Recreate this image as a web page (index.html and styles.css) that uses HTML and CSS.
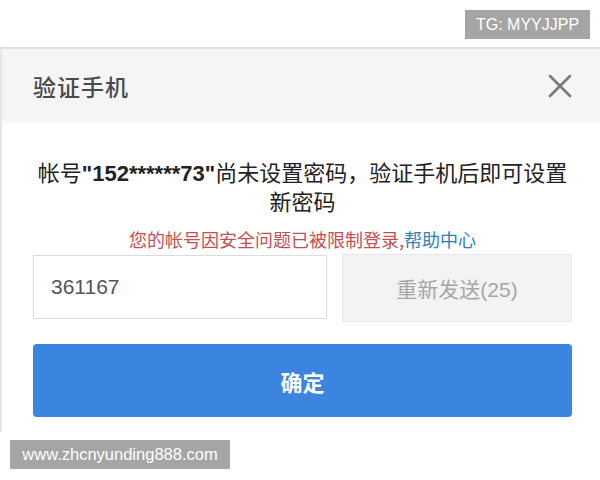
FILE: index.html
```html
<!DOCTYPE html>
<html lang="zh-CN">
<head>
<meta charset="utf-8">
<title>验证手机</title>
<link rel="stylesheet" href="styles.css">
</head>
<body>
<div class="topbar">
  <span class="tag">TG: MYYJJPP</span>
</div>
<div class="dialog">
  <div class="dialog-head">
    <h1 class="title">验证手机</h1>
    <svg class="close" viewBox="0 0 24 24" width="24" height="24" aria-label="关闭">
      <path d="M2 2 L22 22 M22 2 L2 22" stroke="#7a7a7a" stroke-width="2.6" stroke-linecap="round" fill="none"/>
    </svg>
  </div>
  <div class="dialog-body">
    <p class="msg">帐号<b>"152******73"</b>尚未设置密码，验证手机后即可设置新密码</p>
    <p class="warn">您的帐号因安全问题已被限制登录,<a class="help">帮助中心</a></p>
    <div class="code-row">
      <div class="code-input">361167</div>
      <div class="resend">重新发送(25)</div>
    </div>
    <div class="confirm">确定</div>
  </div>
</div>
<div class="footer">
  <span class="site">www.zhcnyunding888.com</span>
</div>
</body>
</html>
```

FILE: styles.css
```css
* { box-sizing: border-box; }
html, body { margin: 0; padding: 0; background: #fff; }
body {
  width: 600px;
  height: 480px;
  overflow: hidden;
  font-family: "Liberation Sans", "Noto Sans CJK SC", sans-serif;
}
.topbar {
  height: 47px;
  display: flex;
  justify-content: flex-end;
  align-items: flex-start;
  padding: 10px 10px 0 0;
}
.tag {
  display: flex;
  align-items: center;
  justify-content: center;
  width: 125px;
  height: 29px;
  background: #a5a5a5;
  color: #fff;
  font-size: 16px;
}
.dialog {
  border-top: 2px solid #dedede;
  border-left: 2px solid #e6e6e6;
  height: 385px;
  background: #fff;
}
.dialog-head {
  height: 74px;
  background: #f5f5f5;
  display: flex;
  align-items: center;
  justify-content: space-between;
  padding: 0 28px 0 31px;
}
.title {
  margin: 0;
  font-family: "Noto Sans CJK SC", sans-serif;
  font-size: 23px;
  font-weight: 500;
  color: #4a4a4a;
  letter-spacing: 1px;
}
.close { display: block; }
.dialog-body {
  padding: 35px 28px 15px 31px;
}
.msg {
  margin: 0;
  text-align: center;
  font-family: "Noto Sans CJK SC", sans-serif;
  font-size: 22px;
  line-height: 27px;
  color: #222;
  padding: 0 4px;
}
.msg b {
  font-family: "Liberation Sans", sans-serif;
  font-weight: bold;
}
.warn {
  margin: 13px 0 3px;
  text-align: center;
  font-family: "Noto Sans CJK SC", sans-serif;
  font-size: 18px;
  line-height: 24px;
  color: #c24f55;
}
.help { color: #2f7fb5; }
.code-row {
  display: flex;
  align-items: flex-start;
  gap: 15px;
}
.code-input {
  width: 294px;
  height: 64px;
  margin-top: 1px;
  border: 1px solid #dcdcdc;
  display: flex;
  align-items: center;
  padding-left: 17px;
  font-size: 21px;
  color: #555;
}
.resend {
  flex: 1;
  height: 68px;
  background: #f3f3f3;
  border: 1px solid #e9e9e9;
  display: flex;
  align-items: center;
  justify-content: center;
  font-family: "Liberation Sans", "Noto Sans CJK SC", sans-serif;
  font-size: 21px;
  color: #a6a6a6;
}
.confirm {
  margin-top: 22px;
  height: 73px;
  background: #3b84e0;
  border-radius: 4px;
  display: flex;
  align-items: center;
  justify-content: center;
  color: #fff;
  font-family: "Noto Sans CJK SC", sans-serif;
  font-size: 22px;
  font-weight: bold;
}
.footer {
  padding: 8px 0 0 10px;
}
.site {
  display: flex;
  align-items: center;
  justify-content: center;
  width: 220px;
  height: 29px;
  background: #a5a5a5;
  color: #fff;
  font-size: 16.5px;
}
```
